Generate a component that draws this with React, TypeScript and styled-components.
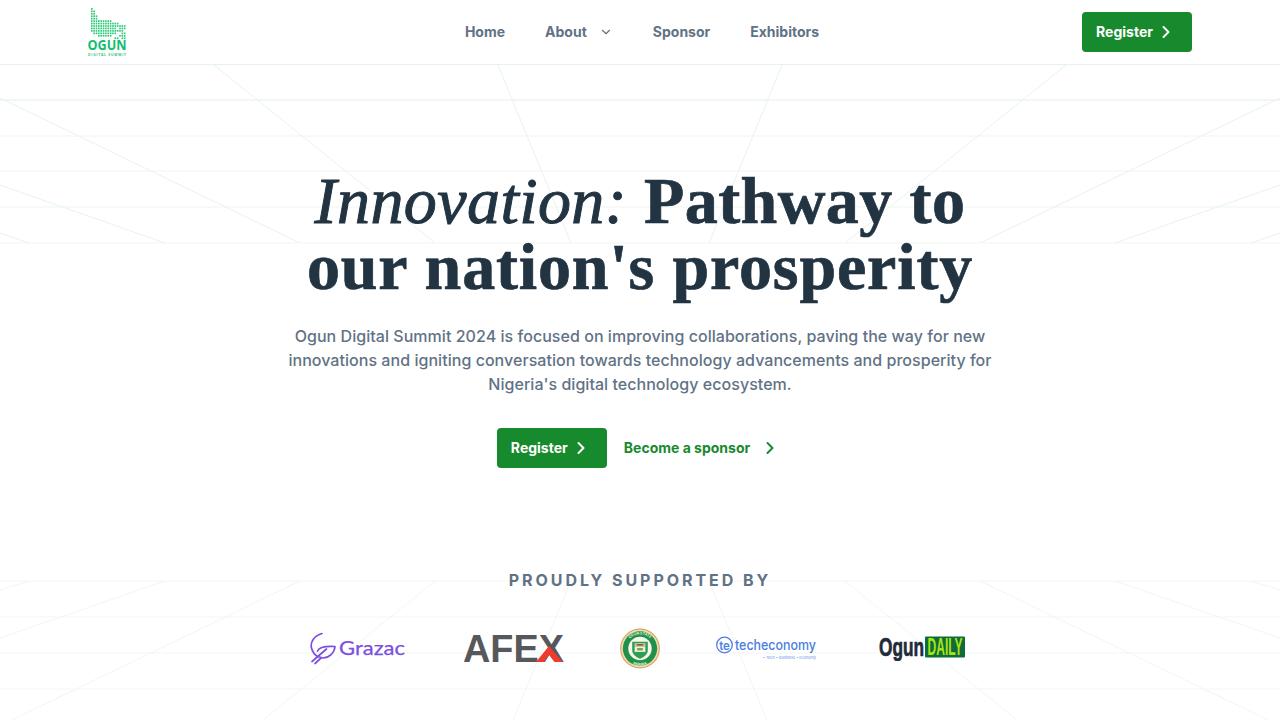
import React from 'react';
import styled, { createGlobalStyle } from 'styled-components';
import { ChevronDown, ChevronRight } from 'lucide-react';

const Global = createGlobalStyle`
  html, body { margin: 0; padding: 0; background: #fff; }
  body { font-family: Inter, "Liberation Sans", sans-serif; overflow: hidden; }
  * { box-sizing: border-box; }
`;

const Page = styled.div`
  position: relative;
  width: 1280px;
  height: 720px;
  overflow: hidden;
  background: #fff;
`;
const Backdrop = styled.svg`
  position: absolute;
  inset: 0;
  width: 1280px;
  height: 720px;
  pointer-events: none;
`;
const Header = styled.header`
  position: relative;
  height: 65px;
  padding: 0 88px 0 86px;
  display: grid;
  grid-template-columns: 1fr auto 1fr;
  align-items: center;
  border-bottom: 1px solid #e5f3e8;
  background: #fff;
`;
const LogoBox = styled.div`
  display: flex;
  align-items: center;
  margin-top: -3px;
`;
const Nav = styled.nav`
  display: flex;
  align-items: center;
  gap: 40px;
  margin-left: 6px;
`;
const NavLink = styled.a`
  display: flex;
  align-items: center;
  gap: 12px;
  font-size: 14px;
  font-weight: 700;
  line-height: 20px;
  color: #617285;
`;
const HeaderEnd = styled.div`
  display: flex;
  justify-content: flex-end;
`;
const Solid = styled.a`
  display: inline-flex;
  align-items: center;
  justify-content: center;
  gap: 3px;
  width: 110px;
  height: 40px;
  padding: 0 2px 1px 0;
  border-radius: 4px;
  background: #188a2e;
  color: #fff;
  font-size: 14px;
  font-weight: 700;
`;
const Hero = styled.main`
  position: relative;
  display: flex;
  flex-direction: column;
  align-items: center;
  padding-top: 103px;
`;
const Title = styled.h1`
  margin: 0;
  width: 760px;
  font-family: "Liberation Serif", serif;
  font-size: 66px;
  line-height: 66px;
  font-weight: 700;
  color: #223342;
  text-align: center;
  -webkit-text-stroke: 0.7px #223342;
`;
const TitleLine = styled.span<{ $track: number }>`
  display: block;
  letter-spacing: ${(p) => p.$track}px;
`;
const Slant = styled.em`
  font-weight: 400;
  -webkit-text-stroke: 1px #223342;
`;
const Lead = styled.p`
  margin: 24px 0 0;
  width: 720px;
  font-size: 16px;
  line-height: 24px;
  font-weight: 500;
  letter-spacing: 0.04px;
  color: #617285;
  text-align: center;
`;
const Actions = styled.div`
  display: flex;
  align-items: center;
  margin-top: 32px;
  gap: 17px;
  margin-left: -3px;
`;
const Ghost = styled.a`
  display: inline-flex;
  align-items: center;
  gap: 10px;
  padding-bottom: 1px;
  color: #188a2e;
  font-size: 14px;
  font-weight: 700;
`;
const Supported = styled.h2`
  margin: 100px 0 0;
  font-size: 16px;
  line-height: 24px;
  font-weight: 700;
  letter-spacing: 2.95px;
  color: #617285;
`;
const Logos = styled.div`
  display: flex;
  align-items: center;
  gap: 56px;
  margin: 32px 0 0 -4px;
  height: 48px;
`;

const rows: [number, number[]][] = [
  [0, [0]], [1, [0, 1]], [2, [0, 1]], [3, [0, 1, 2]], [4, [0, 1, 2]],
  [5, [0, 1, 2, 3, 4, 5, 6, 7, 8]],
  [6, [0, 1, 2, 3, 4, 5, 6, 7, 8, 9, 10, 11]],
  [7, [0, 1, 2, 3, 4, 5, 6, 7, 8, 9, 10, 11, 12, 13, 14]],
  [8, [0, 1, 2, 3, 4, 5, 6, 7, 8, 9, 10, 12, 13, 14]],
  [9, [0, 1, 2, 3, 4, 5, 6, 7, 8, 9, 10, 11, 12, 13]],
  [10, [1, 2, 3, 4, 5, 6, 7, 8, 9, 10, 13, 14]],
  [11, [3, 4, 5, 6, 7, 8, 12, 13, 14]],
  [12, [10, 11, 13, 14]],
];

const OgunLogo = () => (
  <svg width="42" height="50" viewBox="0 0 42 50" aria-label="Ogun Digital Summit">
    {rows.flatMap(([r, cols]) =>
      cols.map((c) => <rect key={`${r}-${c}`} x={5 + c * 2.35} y={2 + r * 2.45} width="1.6" height="1.7" fill="#2ac878" />)
    )}
    <text x="21" y="44" textAnchor="middle" fontFamily="'Open Sans', sans-serif" fontWeight="700" fontSize="14" fill="#0fbf6c" textLength="39" lengthAdjust="spacingAndGlyphs">OGUN</text>
    <text x="21" y="49.5" textAnchor="middle" fontFamily="'Open Sans', sans-serif" fontWeight="700" fontSize="3.4" fill="#2ec57c" textLength="38">DIGITAL SUMMIT</text>
  </svg>
);

const Grazac = () => (
  <svg width="97" height="33" viewBox="0 0 97 33" aria-label="Grazac">
    <g fill="none" stroke="#7c4fe0" strokeWidth="1.7" strokeLinecap="round" strokeLinejoin="round">
      <path d="M12 1.5 C4 4 0 10 1.5 16 C2.5 20 5 23 8 25" />
      <path d="M7.5 19 C9 15 15 14 25 14.5 C24.5 21 19 26 13 26 L9.5 25" />
      <path d="M2 29.5 L16.5 17" />
      <path d="M5 31.5 L11 26" />
    </g>
    <text x="29" y="23" fontFamily="Lato, sans-serif" fontSize="19.5" fontWeight="400" fill="#7c4fe0" stroke="#7c4fe0" strokeWidth="0.25" textLength="66" lengthAdjust="spacingAndGlyphs">Grazac</text>
  </svg>
);

const Afex = () => (
  <svg width="101" height="30" viewBox="0 0 101 30" aria-label="AFEX">
    <text x="0" y="29" fontFamily="'Liberation Sans', sans-serif" fontSize="39" fontWeight="700" textLength="101" lengthAdjust="spacingAndGlyphs" fill="#56585c">AFEX</text>
    <path d="M73 29 L86 13 L100 29 L91.5 29 L86 22 L81 29 Z" fill="#ef3a2e" />
  </svg>
);

const Seal = () => (
  <svg width="40" height="41" viewBox="0 0 41 41" overflow="visible" aria-label="Ogun State seal">
    <defs>
      <path id="sealTop" d="M5.5 21 A15 15 0 0 1 35.5 21" />
      <path id="sealBot" d="M3.5 21 A17 17 0 0 0 37.5 21" />
    </defs>
    <circle cx="20.5" cy="20.5" r="19.8" fill="#f0dcb4" stroke="#d9a566" strokeWidth="1.2" />
    <circle cx="20.5" cy="20.5" r="17.6" fill="#1f9148" />
    <circle cx="20.5" cy="20.5" r="12" fill="#f6f6ec" />
    <text fontFamily="Inter, sans-serif" fontSize="3.6" fontWeight="700" fill="#e7f3df" textAnchor="middle">
      <textPath href="#sealTop" startOffset="50%">OGUN STATE</textPath>
    </text>
    <text fontFamily="Inter, sans-serif" fontSize="3.6" fontWeight="700" fill="#e7f3df" textAnchor="middle">
      <textPath href="#sealBot" startOffset="50%">NIGERIA</textPath>
    </text>
    <path d="M12.5 13.5 H28.5 V23 Q28 28 20.5 31 Q13 28 12.5 23 Z" fill="#2f9e52" />
    <path d="M15 15 H26 V18.5 H15 Z" fill="#d8c796" />
    <path d="M15 18.5 H26 V24 H15 Z" fill="#eef0e0" />
    <path d="M17 16 H24 V17.5 H17 Z" fill="#6b5a3a" />
    <path d="M17.5 20 H23.5 V22.5 H17.5 Z" fill="#7aa35c" />
  </svg>
);

const Techeconomy = () => (
  <svg width="107" height="26" viewBox="1 0 107 26" aria-label="techeconomy">
    <circle cx="9.5" cy="10" r="7.8" fill="none" stroke="#4d7fe6" strokeWidth="1.3" />
    <text x="9.5" y="14.5" textAnchor="middle" fontFamily="Inter, sans-serif" fontSize="11.5" fontWeight="600" fill="#4d7fe6">te</text>
    <text x="20" y="15" fontFamily="Inter, sans-serif" fontSize="14" fontWeight="500" fill="#4a7ce4" textLength="81" lengthAdjust="spacingAndGlyphs">techeconomy</text>
    <text x="101" y="23.5" textAnchor="end" fontFamily="Inter, sans-serif" fontSize="3.8" fill="#6d93e8">• Tech • Business • Economy</text>
  </svg>
);

const OgunDaily = () => (
  <svg width="87" height="26" viewBox="0 0 87 26" aria-label="Ogun Daily">
    <text x="0" y="21" fontFamily="'Liberation Sans', sans-serif" fontWeight="700" fontSize="26" fill="#1f2a3a" stroke="#1f2a3a" strokeWidth="0.7" textLength="45" lengthAdjust="spacingAndGlyphs">Ogun</text>
    <rect x="46" y="1.5" width="40" height="21" rx="1" fill="#0f6b3a" />
    <text x="66" y="20" textAnchor="middle" fontFamily="'Liberation Sans', sans-serif" fontWeight="700" fontSize="23" fill="#a8e414" textLength="35" lengthAdjust="spacingAndGlyphs">DAILY</text>
  </svg>
);

const xs = [29, 165, 300, 435, 571, 709, 845, 980, 1115, 1251];
const topEnds: [number, number][] = [[0, 233], [0, 185], [0, 98], [214, 65], [498, 65], [782, 65], [1066, 65], [1280, 98], [1280, 185], [1280, 233]];
const botEnds: [number, number][] = [[0, 590], [0, 638], [12, 720], [263, 720], [513, 720], [767, 720], [1017, 720], [1268, 720], [1280, 638], [1280, 590]];
const topH = [100, 136, 171, 207, 243];
const botH = [581, 617, 653, 689];

const Grid = () => (
  <Backdrop viewBox="0 0 1280 720">
    {topH.map((y) => <line key={y} x1="0" x2="1280" y1={y} y2={y} stroke={y === 100 ? '#f1f7f2' : '#eef6f1'} strokeWidth={y === 100 ? 2 : 1} />)}
    {botH.map((y) => <line key={y} x1="0" x2="1280" y1={y} y2={y} stroke="#f1f7f3" />)}
    {xs.map((x, i) => <line key={`t${x}`} x1={x} y1="243" x2={topEnds[i][0]} y2={topEnds[i][1]} stroke="#e9f2ec" />)}
    {xs.map((x, i) => <line key={`b${x}`} x1={x} y1="581" x2={botEnds[i][0]} y2={botEnds[i][1]} stroke="#f1f6f2" />)}
  </Backdrop>
);

export default function App() {
  return (
    <Page>
      <Global />
      <Grid />
      <Header>
        <LogoBox><OgunLogo /></LogoBox>
        <Nav>
          <NavLink>Home</NavLink>
          <NavLink>About <ChevronDown size={14} strokeWidth={2} /></NavLink>
          <NavLink>Sponsor</NavLink>
          <NavLink>Exhibitors</NavLink>
        </Nav>
        <HeaderEnd>
          <Solid>Register <ChevronRight size={20} strokeWidth={2.4} /></Solid>
        </HeaderEnd>
      </Header>
      <Hero>
        <Title>
          <TitleLine $track={0.42}><Slant>Innovation:</Slant> Pathway to</TitleLine>
          <TitleLine $track={0.85}>our nation's prosperity</TitleLine>
        </Title>
        <Lead>Ogun Digital Summit 2024 is focused on improving collaborations, paving the way for new innovations and igniting conversation towards technology advancements and prosperity for Nigeria's digital technology ecosystem.</Lead>
        <Actions>
          <Solid>Register <ChevronRight size={20} strokeWidth={2.4} /></Solid>
          <Ghost>Become a sponsor <ChevronRight size={20} strokeWidth={2.4} /></Ghost>
        </Actions>
        <Supported>PROUDLY SUPPORTED BY</Supported>
        <Logos>
          <Grazac />
          <Afex />
          <Seal />
          <Techeconomy />
          <OgunDaily />
        </Logos>
      </Hero>
    </Page>
  );
}
